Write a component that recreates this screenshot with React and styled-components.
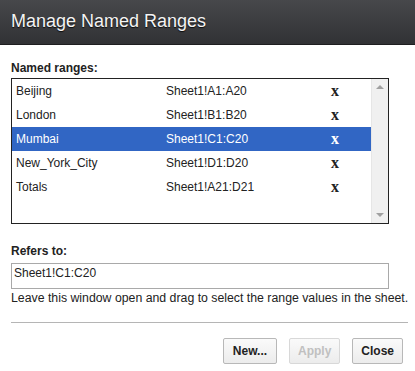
import React from "react";
import styled, { createGlobalStyle } from "styled-components";

const Global = createGlobalStyle`
  body {
    margin: 0;
    background: #fff;
    font-family: "Liberation Sans", Arial, sans-serif;
  }
`;

const Dialog = styled.div`
  width: 415px;
  height: 371px;
  display: flex;
  flex-direction: column;
  overflow: hidden;
`;

const Header = styled.div`
  flex-shrink: 0;
  height: 45px;
  box-sizing: border-box;
  background: linear-gradient(#47484b, #313235);
  border-bottom: 1px solid #1e1e20;
  display: flex;
  align-items: center;
  padding: 0 0 2px 11px;
  color: #f4f4f4;
  font-size: 18px;
  text-shadow: 0 1px 1px rgba(0, 0, 0, 0.8);
`;

const Body = styled.div`
  padding: 0 7px 0 11px;
`;

const Label = styled.div`
  font-size: 12px;
  font-weight: bold;
  color: #222;
  margin-top: ${(p) => p.top}px;
  height: 15px;
  line-height: 15px;
`;

const ListBox = styled.div`
  margin-top: 2px;
  width: 378px;
  height: 146px;
  box-sizing: border-box;
  border: 1px solid #222;
  display: flex;
`;

const Rows = styled.div`
  flex: 1;
`;

const Row = styled.div`
  height: 24px;
  display: grid;
  grid-template-columns: 150px 164px 1fr;
  align-items: center;
  padding-left: 4px;
  font-size: 12px;
  color: ${(p) => (p.selected ? "#fff" : "#222")};
  background: ${(p) => (p.selected ? "#3166c4" : "transparent")};
`;

const Remove = styled.span`
  font-family: "Liberation Serif", "Times New Roman", serif;
  font-weight: bold;
  font-size: 16px;
  padding-left: 1px;
`;

const Scrollbar = styled.div`
  width: 16px;
  background: #f0f0f0;
  border-left: 1px solid #e6e6e6;
  display: flex;
  flex-direction: column;
  justify-content: space-between;
  align-items: center;
  padding: 6px 0;
`;

const Arrow = styled.div`
  width: 0;
  height: 0;
  border-left: 4px solid transparent;
  border-right: 4px solid transparent;
  ${(p) =>
    p.down
      ? "border-top: 4px solid #a0a0a0;"
      : "border-bottom: 4px solid #a0a0a0;"}
`;

const Input = styled.div`
  margin-top: 4px;
  width: 378px;
  height: 26px;
  box-sizing: border-box;
  border: 1px solid #a9a9a9;
  font-size: 12px;
  color: #222;
  padding: 2px 2px;
`;

const Help = styled.div`
  font-size: 12.3px;
  color: #222;
  margin-top: 2px;
  white-space: nowrap;
`;

const Divider = styled.div`
  margin-top: 17px;
  height: 1px;
  background: #b5b5b5;
`;

const Buttons = styled.div`
  display: flex;
  justify-content: flex-end;
  gap: 12px;
  margin-top: 15px;
  padding-right: 5px;
`;

const Button = styled.button`
  height: 26px;
  min-width: ${(p) => p.w}px;
  box-sizing: border-box;
  border: 1px solid ${(p) => (p.disabled ? "#d8d8d8" : "#b8b8b8")};
  border-radius: 2px;
  background: linear-gradient(#fafafa, #ececec);
  font-family: "Liberation Sans", Arial, sans-serif;
  font-size: 12px;
  font-weight: bold;
  color: ${(p) => (p.disabled ? "#c0c0c0" : "#222")};
  padding: 0 8px;
`;

const ranges = [
  ["Beijing", "Sheet1!A1:A20"],
  ["London", "Sheet1!B1:B20"],
  ["Mumbai", "Sheet1!C1:C20"],
  ["New_York_City", "Sheet1!D1:D20"],
  ["Totals", "Sheet1!A21:D21"],
];

export default function App() {
  return (
    <Dialog>
      <Global />
      <Header>Manage Named Ranges</Header>
      <Body>
        <Label top={16}>Named ranges:</Label>
        <ListBox>
          <Rows>
            {ranges.map(([name, ref], i) => (
              <Row key={name} selected={i === 2}>
                <span>{name}</span>
                <span>{ref}</span>
                <Remove>x</Remove>
              </Row>
            ))}
          </Rows>
          <Scrollbar>
            <Arrow />
            <Arrow down />
          </Scrollbar>
        </ListBox>
        <Label top={20}>Refers to:</Label>
        <Input>Sheet1!C1:C20</Input>
        <Help>Leave this window open and drag to select the range values in the sheet.</Help>
        <Divider />
        <Buttons>
          <Button w={54}>New...</Button>
          <Button w={51} disabled>
            Apply
          </Button>
          <Button w={50}>Close</Button>
        </Buttons>
      </Body>
    </Dialog>
  );
}
